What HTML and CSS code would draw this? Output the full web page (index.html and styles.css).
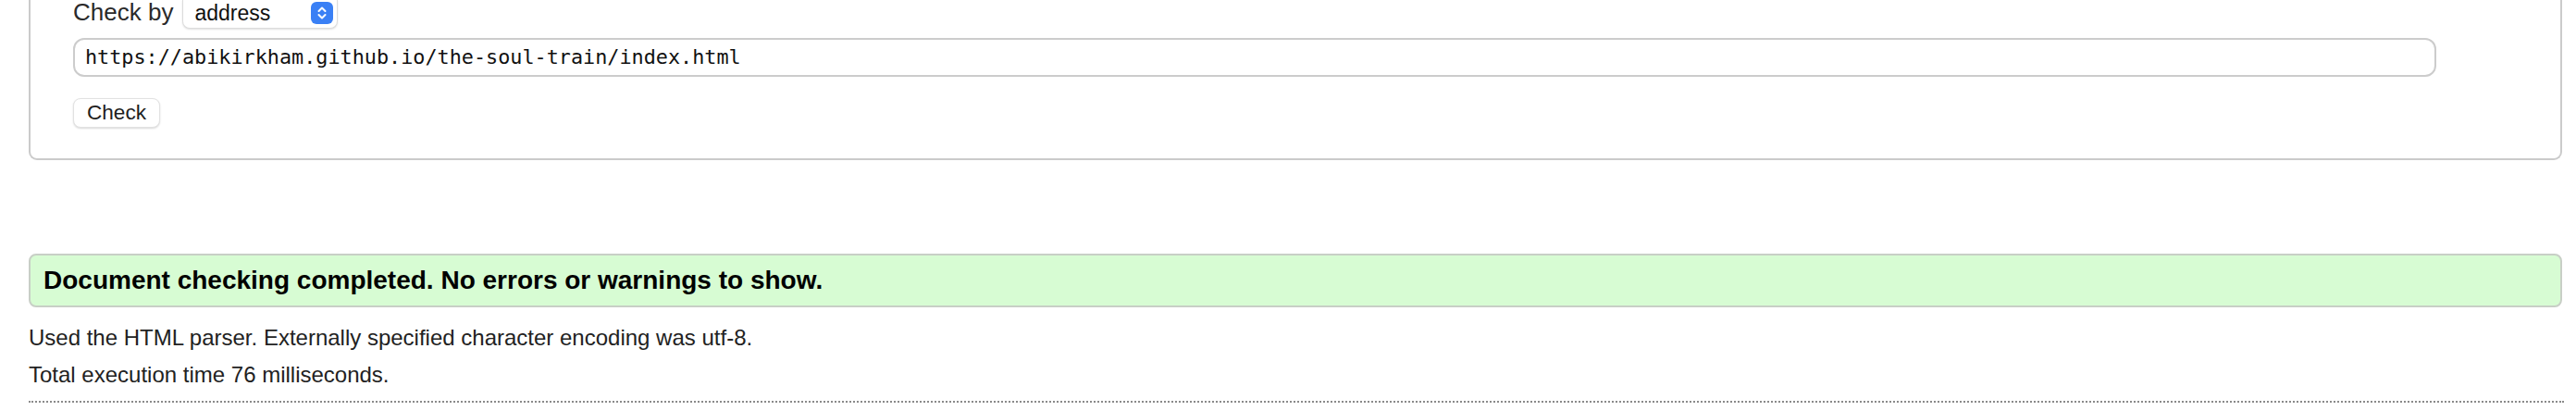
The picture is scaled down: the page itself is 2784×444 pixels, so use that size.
FILE: index.html
```html
<!DOCTYPE html>
<html lang="en">
<head>
<meta charset="utf-8">
<title>Nu Html Checker</title>
<link rel="stylesheet" href="styles.css">
</head>
<body>
<div class="page">
  <form class="checker">
    <div class="by-row">
      <span class="by-label">Check by</span>
      <div class="select">
        <span class="select-value">address</span>
        <span class="stepper">
          <svg width="24" height="24" viewBox="0 0 24 24" aria-hidden="true">
            <path d="M8.5 10 L12 6.5 L15.5 10" fill="none" stroke="#fff" stroke-width="2" stroke-linecap="round" stroke-linejoin="round"/>
            <path d="M8.5 14 L12 17.5 L15.5 14" fill="none" stroke="#fff" stroke-width="2" stroke-linecap="round" stroke-linejoin="round"/>
          </svg>
        </span>
      </div>
    </div>
    <div class="url">https://abikirkham.github.io/the-soul-train/index.html</div>
    <div class="btn-row"><span class="btn">Check</span></div>
  </form>

  <div class="success">Document checking completed. No errors or warnings to show.</div>
  <p class="info">Used the HTML parser. Externally specified character encoding was utf-8.</p>
  <p class="info">Total execution time 76 milliseconds.</p>
  <div class="rule"></div>
</div>
</body>
</html>
```

FILE: styles.css
```css
html, body {
  margin: 0;
  padding: 0;
  background: #fff;
}

body {
  font-family: "Liberation Sans", Arial, Helvetica, sans-serif;
  color: #222;
}

.page {
  padding: 0 15px 0 31px;
}

.checker {
  border: 2px solid #cbcbcb;
  border-top: 0;
  border-radius: 0 0 9px 9px;
  padding: 0 46px 33px 46px;
  display: flex;
  flex-direction: column;
  align-items: flex-start;
}

.by-row {
  display: flex;
  align-items: flex-start;
  gap: 10px;
  height: 31px;
}

.by-label {
  font-size: 26px;
  line-height: 26px;
  color: #2a2a2a;
}

.select {
  box-sizing: border-box;
  width: 168px;
  height: 31px;
  border: 1px solid #dcdcdc;
  border-top: 0;
  border-radius: 0 0 8px 8px;
  box-shadow: 0 1px 2px rgba(0, 0, 0, 0.12);
  display: flex;
  align-items: center;
  justify-content: space-between;
  padding: 0 4px 2px 12px;
  background: #fff;
}

.select-value {
  font-size: 23px;
  line-height: 26px;
  color: #111;
}

.stepper {
  width: 24px;
  height: 24px;
  border-radius: 6px;
  background: #3a80f5;
  display: flex;
}

.url {
  box-sizing: border-box;
  margin-top: 10px;
  width: 2554px;
  height: 42px;
  border: 2px solid #cccccc;
  border-radius: 12px;
  padding: 0 11px;
  font-family: "DejaVu Sans Mono", "Liberation Mono", monospace;
  font-size: 21.8px;
  line-height: 38px;
  color: #111;
}

.btn-row {
  margin-top: 23px;
  display: flex;
}

.btn {
  box-sizing: border-box;
  width: 94px;
  height: 32px;
  border: 1px solid #e2e2e2;
  border-radius: 8px;
  box-shadow: 0 1px 2px rgba(0, 0, 0, 0.15);
  background: #fff;
  font-size: 22.6px;
  line-height: 30px;
  text-align: center;
  color: #1e1e1e;
}

.success {
  margin-top: 101px;
  border: 2px solid #c8cfc6;
  border-radius: 8px;
  background: #d7fcd3;
  padding: 11px 14px;
  font-size: 28px;
  font-weight: bold;
  line-height: 32px;
  color: #000;
}

.info {
  margin: 0;
  font-size: 24px;
  line-height: 40px;
  color: #222;
}

.success + .info {
  margin-top: 13px;
}

.rule {
  margin-top: 8px;
  margin-right: -2px;
  border-top: 2px dotted #8a8a8a;
}
```
